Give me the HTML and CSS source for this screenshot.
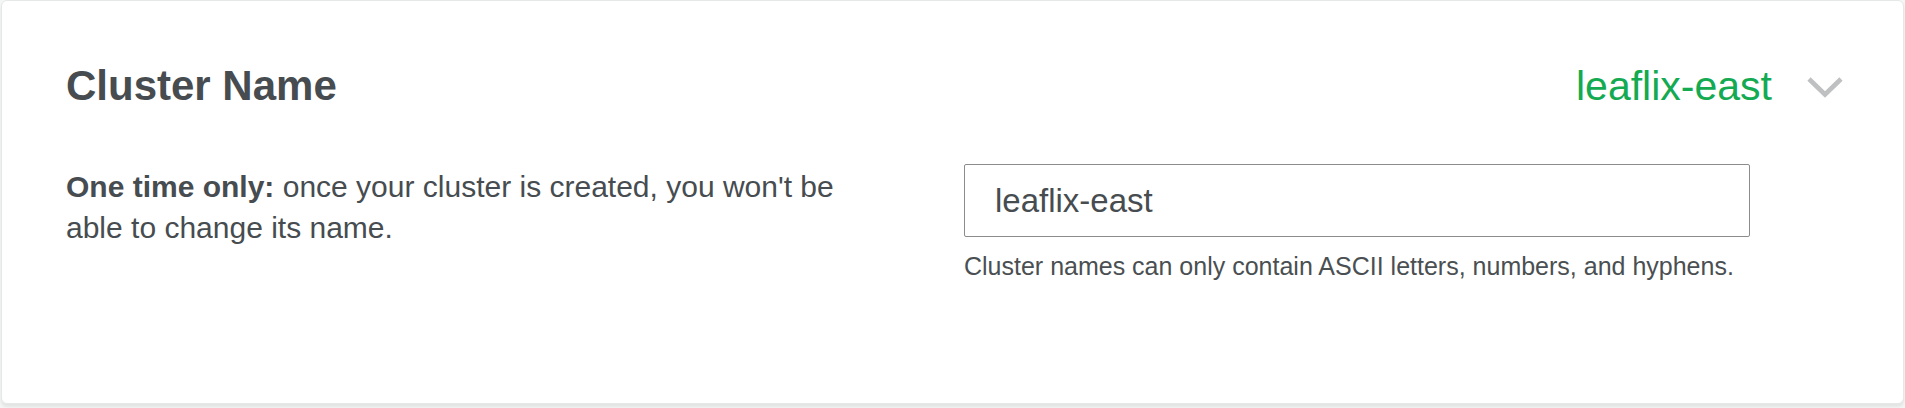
FILE: index.html
```html
<!DOCTYPE html>
<html lang="en">
<head>
<meta charset="utf-8">
<title>Cluster Name</title>
<link rel="stylesheet" href="styles.css">
</head>
<body>
  <section class="card">
    <header class="card-header">
      <h2 class="title">Cluster Name</h2>
      <div class="summary">
        <span class="summary-value">leaflix-east</span>
        <svg class="chevron" width="36" height="22" viewBox="0 0 36 22" aria-hidden="true">
          <polyline points="2,3 18,18.5 34,3" fill="none" stroke="#bfc0c1" stroke-width="4.6"/>
        </svg>
      </div>
    </header>
    <div class="card-body">
      <p class="description"><strong class="desc-lead">One time only:</strong> <span class="desc-text">once your cluster is created, you won't be</span><br><span class="desc-text">able to change its name.</span></p>
      <div class="field">
        <input class="text-input" type="text" value="leaflix-east">
        <p class="hint">Cluster names can only contain ASCII letters, numbers, and hyphens.</p>
      </div>
    </div>
  </section>
</body>
</html>
```

FILE: styles.css
```css
html, body {
  margin: 0;
  padding: 0;
}

body {
  background: #f4f5f5;
  font-family: "Liberation Sans", Arial, Helvetica, sans-serif;
  color: #464c4f;
  padding: 0 1px 4px 1px;
}

.card {
  background: #ffffff;
  border: 1px solid #e6e7e7;
  border-radius: 6px;
  box-shadow: 0 3px 3px rgba(0, 0, 0, 0.07);
  padding: 60px 60px 120px 64px;
  box-sizing: border-box;
  height: 404px;
}

.card-header {
  display: flex;
  align-items: center;
  justify-content: space-between;
  height: 50px;
}

.title {
  margin: 0;
  font-size: 42px;
  line-height: 50px;
  font-weight: 700;
  color: #464c4f;
}

.summary {
  display: flex;
  align-items: center;
  gap: 35px;
}

.summary-value {
  font-size: 41px;
  line-height: 50px;
  color: #13aa52;
}

.chevron {
  display: block;
  margin-top: 2px;
}

.card-body {
  display: flex;
  align-items: flex-start;
  gap: 98px;
  margin-top: 53px;
}

.description {
  flex: 0 0 800px;
  margin: 2px 0 0 0;
  font-size: 30px;
  line-height: 41px;
  color: #464c4f;
}

.desc-lead {
  font-weight: 700;
}

.field {
  width: 786px;
}

.text-input {
  display: block;
  box-sizing: border-box;
  width: 786px;
  height: 73px;
  margin: 0;
  padding: 0 30px;
  border: 1px solid #8c8c8c;
  border-radius: 2px;
  font-family: "Liberation Sans", Arial, Helvetica, sans-serif;
  font-size: 33px;
  color: #464c4f;
  background: #ffffff;
  outline: none;
}

.hint {
  margin: 14px 0 0 0;
  font-size: 25px;
  line-height: 30px;
  color: #4a4f52;
  white-space: nowrap;
}
```
